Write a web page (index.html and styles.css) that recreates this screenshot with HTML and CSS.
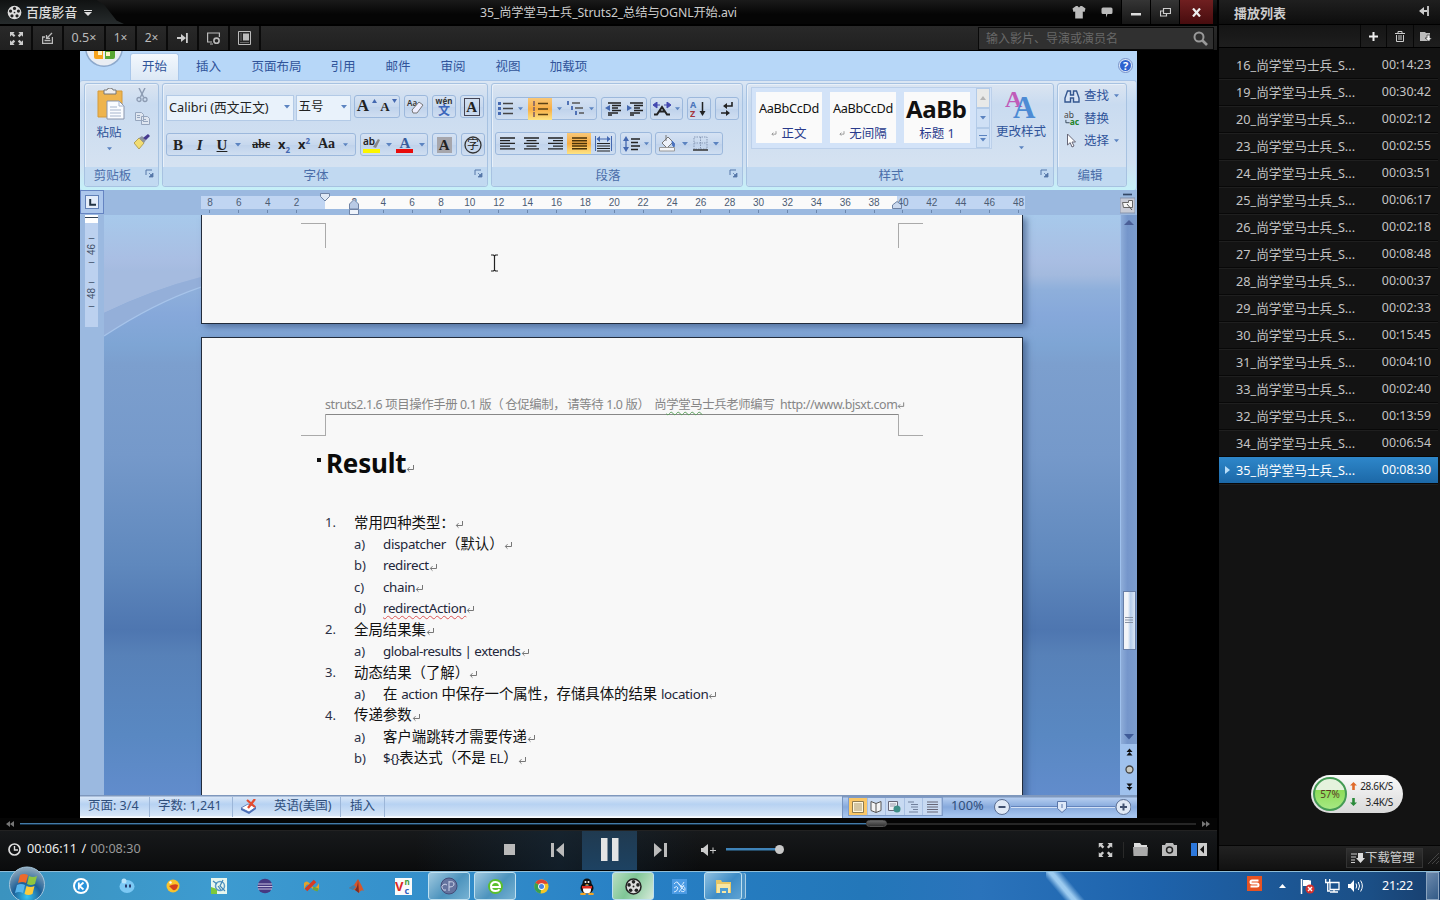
FILE: index.html
```html
<!DOCTYPE html>
<html lang="zh-CN">
<head>
<meta charset="utf-8">
<title>百度影音</title>
<link rel="stylesheet" href="styles.css">
</head>
<body>
<svg class="defs" width="0" height="0">
  <symbol id="ret" viewBox="0 0 9 9"><path d="M7.5 1v4.500h-6M3.500 3.200L1.300 5.500l2.200 2.200" fill="none" stroke="#777" stroke-width="1"/></symbol>
  <symbol id="dd" viewBox="0 0 6 4"><path d="M0 0h6L3 3.500z" fill="#5b83c0"/></symbol>
  <symbol id="launch" viewBox="0 0 9 9"><path d="M1 6V1h6" fill="none" stroke="#5577a8"/><path d="M4 4l3 3M8 4v4H4z" fill="#5577a8" stroke="#5577a8" stroke-width=".8"/></symbol>
  <symbol id="reel" viewBox="0 0 16 16"><circle cx="8" cy="8" r="7.300" fill="#ddd"/><g fill="#222"><circle cx="8" cy="3.600" r="1.700"/><circle cx="12.200" cy="6.500" r="1.700"/><circle cx="10.700" cy="11.500" r="1.700"/><circle cx="5.300" cy="11.500" r="1.700"/><circle cx="3.800" cy="6.500" r="1.700"/><circle cx="8" cy="8" r=".9"/></g></symbol>
  <symbol id="full" viewBox="0 0 14 14"><path d="M0 0h5L3.600 1.500l2.200 2.200-1.700 1.700-2.300-2.200L0 5zM14 0v5l-1.600-1.600-2.300 2.200-1.700-1.700 2.200-2.200L9 0zM0 14V9l1.600 1.600 2.300-2.200 1.700 1.700-2.200 2.200L5 14zM14 14H9l1.600-1.600-2.200-2.300 1.700-1.700 2.300 2.200L14 9z"/></symbol>
</svg>

<div class="desktop">
<main class="player">
  <header class="titlebar">
    <div class="brand"><svg width="15" height="15"><use href="#reel"/></svg><b>百度影音</b><svg width="8" height="6" viewBox="0 0 8 6"><path d="M0 0h8v1H0zM0 2h8L4 6z" fill="#ddd"/></svg></div>
    <div class="movie">35_尚学堂马士兵_Struts2_总结与OGNL开始.avi</div>
    <div class="wins">
      <span class="plain"><svg width="14" height="14" viewBox="0 0 14 14"><path d="M4 1h1.500l1.500 1.500L8.500 1H10l3.500 2.500-1 3.500-1.700-.6V13.500H3.200V6.400L1.500 7l-1-3.500z" fill="#bbb"/></svg></span>
      <span class="plain"><svg width="12" height="11" viewBox="0 0 12 11"><path d="M2 .5h8q1.500 0 1.500 1.500v3.500q0 1.500-1.500 1.500H6.500L5 10.500V7H2Q.5 7 .5 5.500V2Q.5.500 2 .5z" fill="#bbb"/></svg></span>
      <span class="wbtn"><svg width="10" height="10"><path d="M0 6h10v2.500H0z" fill="#ddd"/></svg></span>
      <span class="wbtn"><svg width="11" height="9" viewBox="0 0 11 9"><path d="M3.500.5h7v5h-7zM3 3H.5v5h6V6" fill="none" stroke="#ccc" stroke-width="1.200"/></svg></span>
      <span class="wbtn close"><svg width="9" height="9" viewBox="0 0 9 9"><path d="M1 .5l7 8M8 .5l-7 8" stroke="#eee" stroke-width="2.200"/></svg></span>
    </div>
  </header>
  <div class="toolbar">
    <span><svg width="13" height="13" fill="#ccc"><use href="#full"/></svg></span>
    <span><svg width="11" height="12" viewBox="0 0 11 12"><path d="M3 5H.6v6.400h9.800V5M2.500 8.500h6M10 1L5 6M4.500 3v3.400H8" fill="none" stroke="#bbb" stroke-width="1.300"/></svg></span>
    <span>0.5×</span><span>1×</span><span>2×</span>
    <span><svg width="11" height="10" viewBox="0 0 11 10"><path d="M0 4h4V1l5 4-5 4V6H0zM9 0h1.800v10H9z" fill="#ccc"/></svg></span>
    <span><svg width="14" height="13" viewBox="0 0 14 13"><path d="M5 10H.6V1h11.800v4" fill="none" stroke="#bbb" stroke-width="1.200"/><circle cx="9.500" cy="8.700" r="2.600" fill="none" stroke="#bbb" stroke-width="1.600"/><path d="M3 12h3" stroke="#bbb"/></svg></span>
    <span><svg width="13" height="14" viewBox="0 0 13 14"><path d="M.5.500h12v13H.5z" fill="none" stroke="#bbb"/><path d="M5 2.500h6v7H5z" fill="#bbb"/><path d="M2 11.500h9M3 2v8" stroke="#666"/></svg></span>
    <div class="search">输入影片、导演或演员名<svg width="15" height="15" viewBox="0 0 15 15"><circle cx="6" cy="6" r="4.500" fill="none" stroke="#999" stroke-width="2"/><path d="M9.500 9.500l4.500 4.500" stroke="#999" stroke-width="2.600"/></svg></div>
  </div>

  <section class="video">
  <div class="word">
    <nav class="tabs">
      <div class="orb"><svg width="40" height="17" viewBox="0 0 40 17"><circle cx="20" cy="-3" r="19" fill="#8da9cc"/><circle cx="20" cy="-3" r="17.500" fill="#e9edf3"/><path d="M10 0h9v8h-7q-2 0-2-2z" fill="#f6a21b"/><path d="M21 0h10v6q0 2-2 2h-8z" fill="#58a632"/><path d="M14 0h4v4h-4zM22 1h4v4h-4z" fill="#fff3c0"/></svg></div>
      <span class="on">开始</span><span class="t2">插入</span><span class="t4">页面布局</span><span class="t2 a">引用</span><span class="t2 b">邮件</span><span class="t2 a">审阅</span><span class="t2 b">视图</span><span class="t3">加载项</span>
      <i class="help"><svg width="15" height="15" viewBox="0 0 15 15"><circle cx="7.500" cy="7.500" r="7" fill="#d9e6f8" stroke="#7892c8"/><circle cx="7.500" cy="7.500" r="5.500" fill="#2f62cf"/><text x="7.500" y="11.500" text-anchor="middle" font-size="11" font-weight="700" fill="#fff">?</text></svg></i>
    </nav>

    <div class="ribbon">
      <section class="grp clip">
        <div class="body">
          <div class="paste"><svg width="28" height="32" viewBox="0 0 28 32"><path d="M1 3h24v26H1z" fill="#eeb44d" stroke="#d59a3a"/><path d="M7 2h3q0-2 3-2t3 2h3v4H7z" fill="#eee" stroke="#777"/><path d="M10 13h12l5 5v13H10z" fill="#fafcff" stroke="#8995ac"/><path d="M22 13v5h5M13 19h7M13 22h11M13 25h11M13 28h11" fill="none" stroke="#a6b4cc"/></svg><span>粘贴</span><svg width="5" height="4"><use href="#dd"/></svg></div>
          <div class="mini">
            <svg width="12" height="15" viewBox="0 0 12 15"><path d="M3 0l4.500 9M9 0L4.500 9" stroke="#8c9bb2" stroke-width="1.400"/><circle cx="3" cy="11.500" r="2" fill="none" stroke="#8c9bb2" stroke-width="1.300"/><circle cx="9" cy="11.500" r="2" fill="none" stroke="#8c9bb2" stroke-width="1.300"/></svg>
            <svg width="15" height="13" viewBox="0 0 15 13"><path d="M.5.500h6l2 2v6h-8zM6.500 4.500h6l2 2v6h-8z" fill="#dfe6f0" stroke="#95a5bd"/><path d="M8 7.500h3M8 9.500h5M2 3.500h3M2 5.500h3" stroke="#95a5bd"/></svg>
            <svg width="16" height="15" viewBox="0 0 16 15"><path d="M0 9l5-5 5 5-5 6z" fill="#f1dc72" stroke="#a69241" stroke-width=".8"/><path d="M5 4l3-2 4 4-2 3z" fill="#8d949e"/><path d="M9 4l5-4 2 2-4 4z" fill="#453a8f"/></svg>
          </div>
        </div>
        <footer><b>剪贴板</b><svg width="9" height="9"><use href="#launch"/></svg></footer>
      </section>

      <section class="grp font">
        <div class="body rows">
          <div class="row r1">
            <div class="combo c1"><span>Calibri (西文正文)</span><svg width="6" height="4"><use href="#dd"/></svg></div>
            <div class="combo c2"><span>五号</span><svg width="6" height="4"><use href="#dd"/></svg></div>
            <div class="box w46"><i class="g big">A</i><svg class="tip" width="5" height="4"><path d="M0 4h5L2.500 0z" fill="#4468b0"/></svg><i class="g small">A</i><svg class="tip" width="5" height="4"><path d="M0 0h5L2.500 4z" fill="#4468b0"/></svg></div>
            <div class="box w25"><svg width="19" height="18" viewBox="0 0 19 18"><text x="1" y="8" font-size="8" font-weight="600" fill="#333">Aa</text><path d="M6 12l7-8 4 3-6 8H7z" fill="#eef" stroke="#777"/></svg></div>
            <div class="box w25"><svg width="20" height="20" viewBox="0 0 20 20"><text x="10" y="7" text-anchor="middle" font-size="8" font-weight="700" fill="#333">wén</text><text x="10" y="18" text-anchor="middle" font-size="12" font-weight="700" fill="#3c66bb">文</text></svg></div>
            <div class="box w25"><i class="g frame">A</i></div>
          </div>
          <div class="row r2">
            <div class="box fmt"><i class="g">B</i><i class="g it">I</i><i class="g u">U</i><svg width="6" height="4"><use href="#dd"/></svg><i class="g st">abc</i><i class="g x">x<sub>2</sub></i><i class="g x">x<sup>2</sup></i><i class="g aa">Aa</i><svg width="5" height="4"><use href="#dd"/></svg></div>
            <div class="box w68"><svg width="18" height="18" viewBox="0 0 18 18"><text x="0" y="9" font-size="10" font-weight="600" fill="#222">ab</text><path d="M10 11l5-8 2 1-4 8z" fill="#888"/><path d="M0 13h17v4H0z" fill="#fbf500"/></svg><svg width="6" height="4"><use href="#dd"/></svg><svg width="18" height="18" viewBox="0 0 18 18"><text x="9" y="12" text-anchor="middle" class="serif" font-size="15" font-weight="700" fill="#3a5d9c">A</text><path d="M0 13h17v4H0z" fill="#e80c0c"/></svg><svg width="6" height="4"><use href="#dd"/></svg></div>
            <div class="box w25"><i class="g shade">A</i></div>
            <div class="box w25"><svg width="18" height="18" viewBox="0 0 18 18"><circle cx="9" cy="9" r="8" fill="none" stroke="#333" stroke-width="1.300"/><text x="9" y="13.300" text-anchor="middle" font-size="12" fill="#222">字</text></svg></div>
          </div>
        </div>
        <footer><b>字体</b><svg width="9" height="9"><use href="#launch"/></svg></footer>
      </section>

      <section class="grp para">
        <div class="body rows">
          <div class="row p1">
            <div class="box w102">
              <svg width="15" height="15" viewBox="0 0 15 15"><path d="M5 2.500h10M5 7.500h10M5 12.500h10" stroke="#444" stroke-width="1.300"/><path d="M0 1h3v3H0zM0 6h3v3H0zM0 11h3v3H0z" fill="#4468b0"/></svg><svg width="5" height="4"><use href="#dd"/></svg>
              <b class="hot"><svg width="16" height="16" viewBox="0 0 16 16"><path d="M6 2.500h10M6 8h10M6 13.500h10" stroke="#5b4215" stroke-width="1.400"/><path d="M2 0v5M2 6v4M2 11v5" stroke="#866" stroke-width="1.700"/></svg></b><svg width="5" height="4"><use href="#dd"/></svg>
              <svg width="17" height="15" viewBox="0 0 17 15"><path d="M5 2h8M8 7h8M12 12h5" stroke="#555" stroke-width="1.300"/><path d="M1 0v4M5 5v4M9 10v4" stroke="#4468b0" stroke-width="1.800"/></svg><svg width="5" height="4"><use href="#dd"/></svg>
            </div>
            <div class="box w46">
              <svg width="17" height="14" viewBox="0 0 17 14"><path d="M4 1h13M8 3.500h9M8 6h6M8 8.500h9M4 11h10M4 13h4" stroke="#222" stroke-width="1.400"/><path d="M6 3v6L1 6z" fill="#4468b0"/></svg>
              <svg width="17" height="14" viewBox="0 0 17 14"><path d="M4 1h13M8 3.500h9M8 6h6M8 8.500h9M4 11h10M4 13h4" stroke="#222" stroke-width="1.400"/><path d="M1 3v6l5-3z" fill="#4468b0"/></svg>
            </div>
            <div class="box w33"><svg width="18" height="14" viewBox="0 0 18 14"><path d="M1 12.500h3L9 5l5 7.500h3M6 9.500h6" fill="none" stroke="#222" stroke-width="2"/><path d="M4 0L0 3l4 3zM14 0l4 3-4 3zM4 3h3M11 3h3" fill="#4348b0" stroke="#4348b0"/></svg><svg width="5" height="4"><use href="#dd"/></svg></div>
            <div class="box w25"><svg width="17" height="18" viewBox="0 0 17 18"><text x="0" y="8" font-size="9" font-weight="700" fill="#4a75bb">A</text><text x="0" y="17" font-size="9" font-weight="700" fill="#a3363d">Z</text><path d="M12.500 2v12" stroke="#222" stroke-width="1.500"/><path d="M9.500 11h6l-3 5z" fill="#222"/></svg></div>
            <div class="box w25"><svg width="12" height="14" viewBox="0 0 12 14"><path d="M11 0v4H5M0 11h6" fill="none" stroke="#222" stroke-width="1.600"/><path d="M6 1v6L2 4zM5 8v6l4-3z" fill="#222"/></svg></div>
          </div>
          <div class="row p2">
            <div class="box al">
              <b><svg width="15" height="13" viewBox="0 0 15 13"><path d="M0 1h15M0 3.700h10M0 6.400h15M0 9.100h10M0 11.800h15" stroke="#222" stroke-width="1.300"/></svg></b>
              <b><svg width="15" height="13" viewBox="0 0 15 13"><path d="M0 1h15M2.500 3.700h10M0 6.400h15M2.500 9.100h10M0 11.800h15" stroke="#222" stroke-width="1.300"/></svg></b>
              <b><svg width="15" height="13" viewBox="0 0 15 13"><path d="M0 1h15M5 3.700h10M0 6.400h15M5 9.100h10M0 11.800h15" stroke="#222" stroke-width="1.300"/></svg></b>
              <b class="hot"><svg width="15" height="13" viewBox="0 0 15 13"><path d="M0 1h15M0 3.700h15M0 6.400h15M0 9.100h15M0 11.800h15" stroke="#4a3208" stroke-width="1.500"/></svg></b>
              <b><svg width="17" height="16" viewBox="0 0 17 16"><path d="M.5 0v15M16.500 0v15M2 3h13" stroke="#4468b0"/><path d="M5 0v6L1.500 3zM12 0v6l3.500-3z" fill="#4468b0"/><path d="M2 7.500h13M2 10h13M2 12.500h13M2 15h13" stroke="#222" stroke-width="1.200"/></svg></b>
            </div>
            <div class="box w32"><svg width="17" height="16" viewBox="0 0 17 16"><path d="M3 2v12" stroke="#4468b0" stroke-width="1.300"/><path d="M0 5l3-5 3 5zM0 11l3 5 3-5z" fill="#4468b0"/><path d="M8 3h9M8 6.500h7M8 10h9M8 13.500h7" stroke="#222" stroke-width="1.400"/></svg><svg width="5" height="4"><use href="#dd"/></svg></div>
            <div class="box w68"><svg width="18" height="17" viewBox="0 0 18 17"><path d="M3 8l6-6 5 5-6 6z" fill="#eef2fa" stroke="#777"/><path d="M7 0v6" stroke="#777"/><path d="M13 6q4 2 2 6-2-1-2-6z" fill="#4971bd" stroke="#4971bd"/><path d="M.5 12.500h15v3.500H.5z" fill="#f2f4f7" stroke="#999"/></svg><svg width="6" height="4"><use href="#dd"/></svg><svg width="15" height="15" viewBox="0 0 15 15"><path d="M1 1h13v12H1zM7.500 1v12M1 7h13" fill="none" stroke="#8798b5" stroke-dasharray="1.500 1"/><path d="M0 14h15" stroke="#333" stroke-width="1.500"/></svg><svg width="6" height="4"><use href="#dd"/></svg></div>
          </div>
        </div>
        <footer><b>段落</b><svg width="9" height="9"><use href="#launch"/></svg></footer>
      </section>

      <section class="grp sty">
        <div class="body">
          <div class="gallery">
            <div class="card"><em>AaBbCcDd</em><span><svg width="6" height="7"><use href="#ret"/></svg> 正文</span></div>
            <div class="card"><em>AaBbCcDd</em><span><svg width="6" height="7"><use href="#ret"/></svg> 无间隔</span></div>
            <div class="card"><em class="h1">AaBb</em><span>标题 1</span></div>
            <div class="updn"><i class="off"><svg width="6" height="4" viewBox="0 0 6 4"><path d="M0 4h6L3 0z" fill="#b5b5b5"/></svg></i><i><svg width="6" height="4"><use href="#dd"/></svg></i><i><svg width="8" height="7" viewBox="0 0 8 7"><path d="M0 .5h8" stroke="#5b83c0"/><path d="M1 3h6L4 6.500z" fill="#5b83c0"/></svg></i></div>
          </div>
          <div class="change"><svg width="32" height="30" viewBox="0 0 32 30"><text x="0" y="18" class="serif" font-size="24" font-weight="700" fill="#c05bb9">A</text><text x="8" y="29" class="serif" font-size="31" font-weight="700" fill="#4d8bd4">A</text></svg><span>更改样式</span><svg width="5" height="4"><use href="#dd"/></svg></div>
        </div>
        <footer><b>样式</b><svg width="9" height="9"><use href="#launch"/></svg></footer>
      </section>

      <section class="grp edit">
        <div class="body">
          <p><svg width="15" height="13" viewBox="0 0 15 13"><path d="M3 1h3v4h3V1h3l2.500 7v4H9V8H6v4H.5V8z" fill="#dae5f5" stroke="#33568f" stroke-width="1.400"/></svg><span>查找</span><svg width="5" height="4"><use href="#dd"/></svg></p>
          <p><svg width="17" height="15" viewBox="0 0 17 15"><text x="0" y="7" font-size="9" fill="#444">ab</text><text x="6" y="14" font-size="9" font-weight="700" fill="#22832a">ac</text><path d="M2 9v3h4" fill="none" stroke="#345"/></svg><span>替换</span></p>
          <p><svg width="15" height="14" viewBox="0 0 15 14"><path d="M3 0v11l2.700-2.400L7.500 13l2-1-2-4h3.500z" fill="#fff" stroke="#667"/></svg><span>选择</span><svg width="5" height="4"><use href="#dd"/></svg></p>
        </div>
        <footer><b>编辑</b></footer>
      </section>
    </div>

    <div class="hruler">
      <div class="tabsel"><i><svg width="7" height="7"><path d="M1.200 0v5.800H7" fill="none" stroke="#234" stroke-width="2"/></svg></i></div>
      <div class="scale">
        <div class="nums"><i>8</i><i>6</i><i>4</i><i>2</i><i></i><i>2</i><i>4</i><i>6</i><i>8</i><i>10</i><i>12</i><i>14</i><i>16</i><i>18</i><i>20</i><i>22</i><i>24</i><i>26</i><i>28</i><i>30</i><i>32</i><i>34</i><i>36</i><i>38</i><i>40</i><i>42</i><i>44</i><i>46</i><i>48</i></div>
        <svg class="mk first" width="10" height="9" viewBox="0 0 10 9"><path d="M.5.500h9v3L5 8 .5 3.500z" fill="#dfe8f5" stroke="#6f83a5"/></svg>
        <svg class="mk left" width="10" height="16" viewBox="0 0 10 16"><path d="M5 .5l4.500 4.500v5h-9V5z" fill="#b9cbe6" stroke="#6f83a5"/><path d="M.5 10.500h9v5h-9z" fill="#eef3fb" stroke="#6f83a5"/></svg>
        <svg class="mk right" width="10" height="8" viewBox="0 0 10 8"><path d="M5 .5L9.500 4v3.500h-9V4z" fill="#cbd9ee" stroke="#6f83a5"/></svg>
      </div>
      <div class="corner"><svg width="15" height="22" viewBox="0 0 15 22"><path d="M3 2.500h9" stroke="#334766" stroke-width="1.700"/><path d="M0 6h15v15H0z" fill="#c8cbd6" stroke="#8794ad"/><path d="M2.500 10.500h6v-2h4v7h-9z" fill="#f5f5f5" stroke="#666"/><path d="M7 12l5 6" stroke="#555"/></svg></div>
    </div>

    <div class="doc">
      <div class="vruler"><div class="vs"><b></b><i>–</i><u>46</u><i>–</i><i>–</i><u>48</u><i>–</i></div></div>
      <div class="canvas">
        <svg class="curve" width="97" height="125" viewBox="0 0 97 125"><path d="M0 56H97V62Q50 74 0 98z" fill="#a5bbdf"/><path d="M0 98Q50 74 97 62V72Q50 88 0 121z" fill="#94afd9"/><path d="M0 121Q50 88 97 72" fill="none" stroke="#a7c4ea" stroke-width="1.300"/></svg>
        <article class="page one"><i class="cm br"></i><i class="cm bl"></i></article>
        <article class="page two">
          <div class="phead"><span>struts2.1.6 项目操作手册 0.1 版<q>（</q>仓促编制<q>，</q>请等待 1.0 版<q>）</q>&nbsp;尚<s>学堂马</s>士兵老师编写&nbsp; http://www.bjsxt.com</span><svg width="8" height="9"><use href="#ret"/></svg></div>
          <div class="corners"><i class="cm tr"></i><i class="cm tl"></i></div>
          <h1><i></i>Result<svg width="9" height="9"><use href="#ret"/></svg></h1>
          <ol class="list">
            <li><b>1.</b><span>常用四种类型：</span><svg width="9" height="9"><use href="#ret"/></svg></li>
            <li class="sub"><b>a)</b><span><em>dispatcher</em>（默认）</span><svg width="9" height="9"><use href="#ret"/></svg></li>
            <li class="sub"><b>b)</b><span><em>redirect</em></span><svg width="9" height="9"><use href="#ret"/></svg></li>
            <li class="sub"><b>c)</b><span><em>chain</em></span><svg width="9" height="9"><use href="#ret"/></svg></li>
            <li class="sub"><b>d)</b><span><em class="bad">redirectAction</em></span><svg width="9" height="9"><use href="#ret"/></svg></li>
            <li><b>2.</b><span>全局结果集</span><svg width="9" height="9"><use href="#ret"/></svg></li>
            <li class="sub"><b>a)</b><span><em class="tight">global-results | extends</em></span><svg width="9" height="9"><use href="#ret"/></svg></li>
            <li><b>3.</b><span>动态结果（了解）</span><svg width="9" height="9"><use href="#ret"/></svg></li>
            <li class="sub"><b>a)</b><span>在 <em>action</em> 中保存一个属性，存储具体的结果 <em>location</em></span><svg width="9" height="9"><use href="#ret"/></svg></li>
            <li><b>4.</b><span>传递参数</span><svg width="9" height="9"><use href="#ret"/></svg></li>
            <li class="sub"><b>a)</b><span>客户端跳转才需要传递</span><svg width="9" height="9"><use href="#ret"/></svg></li>
            <li class="sub"><b>b)</b><span><em class="tight">${}</em>表达式（不是 <em>EL</em>）</span><svg width="9" height="9"><use href="#ret"/></svg></li>
          </ol>
        </article>
        <svg class="ibeam" width="9" height="18" viewBox="0 0 9 18"><path d="M1 1h2.500l1 1 1-1H8M4.500 2v14M1 17h2.500l1-1 1 1H8" fill="none" stroke="#222" stroke-width="1.200"/></svg>
      </div>
      <div class="vscroll">
        <div class="track"><svg width="10" height="6"><path d="M0 5h10L5 0z" fill="#4a5f98"/></svg><div class="thumb"><svg width="8" height="8"><path d="M0 .5h8M0 3h8M0 5.500h8" stroke="#8a93a5"/></svg></div><svg width="10" height="6"><path d="M0 0h10L5 5.500z" fill="#3f5b98"/></svg></div>
        <div class="jump"><svg width="7" height="8" viewBox="0 0 7 8"><path d="M.5 4L3.500.5l3 3.500zM.5 7.500l3-3.500 3 3.500z" fill="#111"/></svg><svg width="9" height="9"><circle cx="4.500" cy="4.500" r="3.500" fill="#c9c9c0" stroke="#444" stroke-width="1.300"/></svg><svg width="7" height="8" viewBox="0 0 7 8"><path d="M.5.500h6l-3 3.500zM.5 4h6l-3 3.500z" fill="#111"/></svg></div>
      </div>
    </div>

    <div class="status">
      <span class="s1">页面: 3/4</span><span class="s2">字数: 1,241</span><span class="s3"><svg width="17" height="15" viewBox="0 0 17 15"><path d="M0 9l7-4 8 3-7 5z" fill="#fff" stroke="#6983bb"/><path d="M0 9l8 4 7-5v2l-7 5-8-4z" fill="#4a6db5"/><path d="M6 1l8 7M14 0L7 9" stroke="#e44b2f" stroke-width="2.300"/></svg></span><span class="s4">英语(美国)</span><span class="s5">插入</span>
      <div class="sright">
        <div class="views">
          <i class="on"><svg width="12" height="12"><path d="M.5.500h11v11H.5z" fill="#fff7dc" stroke="#8d7b50"/><path d="M2 3h8M2 5h8M2 7h8M2 9h8" stroke="#a8956a"/></svg></i>
          <i><svg width="12" height="12"><path d="M6 2.500L1 .5v9l5 2 5-2v-9zM6 2.500v9" fill="#f4f4f4" stroke="#555"/></svg></i>
          <i><svg width="13" height="12"><path d="M.5.500h9v9h-9z" fill="#eef2f7" stroke="#667"/><path d="M2 3h6M2 5h5" stroke="#99a"/><circle cx="9" cy="8" r="3.500" fill="#3d8f88"/></svg></i>
          <i><svg width="11" height="12"><path d="M0 1h6M3 3.500h7M3 6h7M5 8.500h5M1 11h9" stroke="#71809c"/></svg></i>
          <i><svg width="11" height="12"><path d="M0 1h11M0 3.500h11M0 6h11M0 8.500h11M0 11h11" stroke="#667"/></svg></i>
        </div>
        <span class="pct">100%</span>
        <svg width="138" height="18" viewBox="0 0 138 18"><path d="M18 8.500h104" stroke="#6384bd"/><path d="M18 9.500h104" stroke="#d3e1f5"/><g fill="#dfe8f5" stroke="#596d91"><circle cx="9" cy="9" r="7.500"/><circle cx="130.500" cy="9" r="7.500"/></g><path d="M5.500 9h7M127 9h7M130.500 5.500v7" stroke="#40506f" stroke-width="2"/><path d="M64.500 3.500h9v7l-4.500 4-4.500-4z" fill="#dfe9f8" stroke="#5a76a8"/><path d="M69 6v4" stroke="#5a76a8"/></svg>
      </div>
    </div>
  </div>
  </section>

  <div class="seek"><svg width="8" height="6"><path d="M4 0v6L0 3zM8 0v6L4 3z" fill="#777"/></svg><div class="bar"><i></i><b></b></div><svg width="8" height="6"><path d="M0 0v6l4-3zM4 0v6l4-3z" fill="#777"/></svg></div>

  <div class="controls">
    <svg width="13" height="13"><circle cx="6.500" cy="6.500" r="5.500" fill="none" stroke="#ddd" stroke-width="1.700"/><path d="M6.500 3v4H10" fill="none" stroke="#ddd" stroke-width="1.400"/></svg>
    <span class="time"><b>00:06:11 /</b> 00:08:30</span>
    <div class="mid">
      <span class="k1"><svg width="11" height="11"><path d="M0 0h11v11H0z" fill="#b9b9b9"/></svg></span>
      <span class="k2 prev"><svg width="13" height="14"><path d="M0 0h3v14H0zM13 0v14L5 7z" fill="#bbb"/></svg></span>
      <span class="pause"><svg width="18" height="23"><path d="M0 0h6.500v23H0zM11 0h6.500v23H11z" fill="#e4e4e4"/></svg></span>
      <span class="k2"><svg width="13" height="14"><path d="M10 0h3v14h-3zM0 0v14l8-7z" fill="#bbb"/></svg></span>
    </div>
    <svg class="vol" width="15" height="12"><path d="M0 4h2l5-4v12L2 8H0z" fill="#ccc"/><path d="M9 6.500h6M12 3.500v6" stroke="#ccc"/></svg>
    <div class="vbar"></div>
    <div class="right">
      <svg width="15" height="14" viewBox="0 0 14 14" fill="#ccc"><use href="#full"/></svg><i></i>
      <svg width="15" height="13"><path d="M1 0h6l1.500 2H14v2H1z" fill="#ddd"/><path d="M0 4h15l-.5 9H.5z" fill="#aaa"/></svg>
      <svg width="15" height="13"><path d="M4 0h7l1 2h3v11H0V2h3z" fill="#bbb"/><circle cx="7.500" cy="7" r="3" fill="none" stroke="#222" stroke-width="1.500"/></svg>
      <svg width="16" height="13"><path d="M0 0h6v13H0z" fill="#2d78dc"/><path d="M7 0h9v13H7z" fill="#ccc"/><path d="M13 2.500v8L9 6.500z" fill="#111"/></svg>
    </div>
  </div>
</main>

<aside class="playlist">
  <header><b>播放列表</b><svg width="10" height="10"><path d="M9 0v10M1 5h7" stroke="#ccc" stroke-width="1.800"/><path d="M5 1v8L0 5z" fill="#ccc"/></svg></header>
  <div class="pt"><span><svg width="9" height="9"><path d="M0 4.500h9M4.500 0v9" stroke="#eee" stroke-width="2"/></svg></span><span><svg width="10" height="11"><path d="M0 2.500h10M3 2V.5h4V2" fill="none" stroke="#ccc"/><path d="M1.500 4v6.500h7V4M4 4v5M6 4v5" fill="none" stroke="#ccc"/></svg></span><span><svg width="12" height="10"><path d="M0 1h5l1 1h4v8H0z" fill="#bbb"/><path d="M7 4h3v3h2l-3.500 3L5 7h2z" fill="#eee" stroke="#222" stroke-width=".6"/></svg></span></div>
  <ul>
    <li><span>16_尚学堂马士兵_S...</span><time>00:14:23</time></li>
    <li><span>19_尚学堂马士兵_S...</span><time>00:30:42</time></li>
    <li><span>20_尚学堂马士兵_S...</span><time>00:02:12</time></li>
    <li><span>23_尚学堂马士兵_S...</span><time>00:02:55</time></li>
    <li><span>24_尚学堂马士兵_S...</span><time>00:03:51</time></li>
    <li><span>25_尚学堂马士兵_S...</span><time>00:06:17</time></li>
    <li><span>26_尚学堂马士兵_S...</span><time>00:02:18</time></li>
    <li><span>27_尚学堂马士兵_S...</span><time>00:08:48</time></li>
    <li><span>28_尚学堂马士兵_S...</span><time>00:00:37</time></li>
    <li><span>29_尚学堂马士兵_S...</span><time>00:02:33</time></li>
    <li><span>30_尚学堂马士兵_S...</span><time>00:15:45</time></li>
    <li><span>31_尚学堂马士兵_S...</span><time>00:04:10</time></li>
    <li><span>33_尚学堂马士兵_S...</span><time>00:02:40</time></li>
    <li><span>32_尚学堂马士兵_S...</span><time>00:13:59</time></li>
    <li><span>34_尚学堂马士兵_S...</span><time>00:06:54</time></li>
    <li class="now"><svg width="5" height="8"><path d="M0 0v8l5-4z" fill="#b9ddf8"/></svg><span>35_尚学堂马士兵_S...</span><time>00:08:30</time></li>
  </ul>
  <footer><div class="dl"><svg width="14" height="10"><path d="M0 1h6M0 4h5M0 7h4M0 9.500h4" stroke="#ccc"/><path d="M7 0h5v5h2L9.500 10 5 5h2z" fill="#ddd"/></svg>下载管理</div><svg width="13" height="13"><path d="M1 12L12 1M5 12l7-7M9 12l3-3" stroke="#444"/></svg></footer>
  <div class="pill"><div class="ball">57%</div><div class="rates"><p><svg width="7" height="8"><path d="M3.500 0L7 3.500H4.800V8H2.200V3.500H0z" fill="#e06a2b"/></svg>28.6K/S</p><p><svg width="7" height="8"><path d="M3.500 8L7 4.500H4.800V0H2.200v4.500H0z" fill="#2b8a3a"/></svg>3.4K/S</p></div></div>
</aside>
</div>

<footer class="taskbar">
  <div class="start"><svg width="38" height="34" viewBox="0 0 38 34"><defs><radialGradient id="sg" cx=".5" cy=".85" r=".8"><stop offset="0" stop-color="#35c4f2"/><stop offset=".5" stop-color="#1c5f97"/><stop offset="1" stop-color="#8aa5ba"/></radialGradient></defs><circle cx="19" cy="18.500" r="17.500" fill="url(#sg)" stroke="#a3c6dc"/><path d="M12 9q4-2 8 0l-2 8q-4-2-8 0z" fill="#ee6a2c"/><path d="M21 10q4 2 8 0l-2 8q-4 2-8 0z" fill="#8fc640"/><path d="M9 19q4-2 8 0l-2 8q-4-2-8 0z" fill="#58b5ec"/><path d="M18.500 20q4 2 8 0l-2 8q-4 2-8 0z" fill="#fbcb3c"/></svg></div>
  <span><svg width="18" height="18" viewBox="0 0 18 18"><circle cx="9" cy="9" r="8" fill="#fff"/><circle cx="9" cy="9" r="6" fill="#2a93da"/><path d="M6.800 5.500v7M11.500 5.500L7.500 9l4 3.500" fill="none" stroke="#fff" stroke-width="1.800"/></svg></span>
  <span><svg width="16" height="16"><ellipse cx="8" cy="8.500" rx="7.500" ry="6.500" fill="#7cc9f5"/><circle cx="5" cy="3" r="2.500" fill="#b5e2fa"/><path d="M7 6.500v3M11 6.500v3" stroke="#114" stroke-width="1.500"/></svg></span>
  <span><svg width="16" height="16"><circle cx="8" cy="8" r="6.500" fill="#f9c32d"/><path d="M4 8q6-3 9-1-1 6-5 5z" fill="#d5401d"/><circle cx="5.500" cy="4.500" r="1.200" fill="#fff"/></svg></span>
  <span><svg width="16" height="16"><path d="M0 0h16v16H0z" fill="#e7f6ee"/><path d="M0 9l6 2v5H0z" fill="#7dc93c"/><circle cx="9" cy="8" r="4.500" fill="none" stroke="#5b9bc8" stroke-width="1.500"/><path d="M2 3l4 3M12 2l-3 6 5 5M7 8l3 4" stroke="#4288b5" stroke-width="1.200" fill="none"/></svg></span>
  <span><svg width="16" height="16"><circle cx="8" cy="8" r="7.300" fill="#463881"/><path d="M1 6h14M.5 8.500h15M1 11h14" stroke="#c5bddd" stroke-width="1.100"/></svg></span>
  <span><svg width="17" height="14"><path d="M1 4q3-4 7 2t8-2v6q-4 4-8-2t-7 3z" fill="#e5a329"/><path d="M3 11L12 2" stroke="#d83b22" stroke-width="3.500"/><path d="M10 9l5 2" stroke="#6ba63a" stroke-width="3"/></svg></span>
  <span><svg width="16" height="15"><path d="M0 9l5-3 4-6q3 5 6 12-3-2-5 2l-4-3z" fill="#d7562a"/><path d="M0 9l5-3 2 2-3 3z" fill="#3f7ea9"/><path d="M9 0q0 8-3 11l4 3z" fill="#792d27"/></svg></span>
  <span><svg width="17" height="17"><path d="M0 0h17v17H0z" fill="#fafafa"/><text x="0" y="13" font-size="13" font-weight="700" fill="#da2828">V</text><text x="9.500" y="7" font-size="8" font-weight="700" fill="#3a9b35">n</text><text x="9.500" y="15.500" font-size="9" font-weight="700" fill="#2c60c4">c</text></svg></span>
  <span class="open"><svg width="18" height="18"><circle cx="9" cy="9" r="8" fill="#65739e" stroke="#444c78"/><path d="M6 13a3 3 0 1 1 1-5M9 4v10M9 5q5-1 5 2t-5 3" fill="none" stroke="#cfd5ea"/></svg></span>
  <span class="open"><svg width="17" height="17"><circle cx="8.500" cy="8.500" r="7.500" fill="#5abf2c"/><path d="M5 9h8q0-5-4.500-5T4 8.500 8.500 13q3 0 4-1.800" fill="none" stroke="#fff" stroke-width="2"/></svg></span>
  <span><svg width="15" height="15" viewBox="0 0 16 16"><circle cx="8" cy="8" r="7.500" fill="#f3c626"/><path d="M8 8L1.500 4A7.500 7.500 0 0 1 14.800 5H8z" fill="#dc4435"/><path d="M8 8L1.500 4A7.500 7.500 0 0 0 7 15.400z" fill="#36a052"/><circle cx="8" cy="8" r="3.600" fill="#fff"/><circle cx="8" cy="8" r="2.700" fill="#4a86e4"/></svg></span>
  <span><svg width="16" height="17"><ellipse cx="8" cy="10" rx="6.500" ry="6" fill="#111"/><circle cx="8" cy="5" r="4.500" fill="#111"/><ellipse cx="8" cy="11.500" rx="4" ry="4" fill="#fff"/><path d="M3 8h10v2.500H3z" fill="#e12d22"/><ellipse cx="4" cy="16" rx="3" ry="1.200" fill="#f5a623"/><ellipse cx="12" cy="16" rx="3" ry="1.200" fill="#f5a623"/><circle cx="6.500" cy="4" r="1" fill="#fff"/><circle cx="9.500" cy="4" r="1" fill="#fff"/><path d="M6 6h4L8 7z" fill="#f5a623"/></svg></span>
  <span class="open lit"><svg width="17" height="17"><use href="#reel"/><circle cx="8.500" cy="8.500" r="7.500" fill="none" stroke="#222" stroke-width="1.500"/></svg></span>
  <span><svg width="15" height="15"><path d="M0 0h15v15H0z" fill="#4b9be4"/><path d="M2 5q3-4 5 0t5-2M2 9q3-3 4 0-1 4-4 4M8 8q5-2 5 2t-4 2M5 3l7 8M12 6L7 13" fill="none" stroke="#d8ecff"/></svg></span>
  <span class="open last"><svg width="17" height="15"><path d="M1 1h5l1 2h9v11H1z" fill="#e8c766"/><path d="M2 5h13v9H2z" fill="#f8e7a3"/><path d="M5 9h8v5h-2v-2H7v2H5z" fill="#4f9ed4"/></svg></span>
  <div class="tray">
    <svg class="sg" width="15" height="15"><path d="M0 0h15v15H0z" fill="#e65323"/><path d="M11.500 4.500H5q-1.500 0-1.500 1.500T5 7.500h5q1.500 0 1.500 1.500T10 10.500H3.500" fill="none" stroke="#fff" stroke-width="2"/></svg>
    <svg class="more" width="7" height="4"><path d="M0 4h7L3.500 0z" fill="#fff"/></svg>
    <svg width="15" height="15"><path d="M1.500 0v15" stroke="#fff" stroke-width="1.500"/><path d="M3 1h6q2 1 2 0v6H3z" fill="#fff"/><circle cx="10" cy="10" r="4.500" fill="#d5312d"/><path d="M8 8l4 4M12 8l-4 4" stroke="#fff" stroke-width="1.400"/></svg>
    <svg width="15" height="14"><path d="M5 3.500h9v7H5zM5 13h8M9 10v3" fill="none" stroke="#fff" stroke-width="1.300"/><path d="M.7 0v3.500h4V0M2.700 3.500V12H5" fill="none" stroke="#fff" stroke-width="1.300"/></svg>
    <svg width="15" height="14"><path d="M0 5h2.500L6 1v12L2.500 9H0z" fill="#fff"/><path d="M8 4.500q1.500 2.500 0 5M10.300 3q2.500 4 0 8M12.600 1.500q3.500 5.500 0 11" fill="none" stroke="#fff"/></svg>
    <time>21:22</time><i class="peek"></i>
  </div>
</footer>
</body>
</html>
```

FILE: styles.css
```css
* { box-sizing: border-box; margin: 0; padding: 0; }
body { width: 1440px; height: 900px; overflow: hidden; background: #000; font: 12.5px/1 "Noto Sans", "Noto Sans CJK SC", sans-serif; color: #ccc; white-space: nowrap; }
svg { display: block; flex: none; }
i, em { font-style: normal; }
ul, ol { list-style: none; }
.defs { position: absolute; }
.serif { font-family: "Liberation Serif", serif; }
.desktop { display: flex; height: 871px; border-bottom: 1px solid #000; }
.player { width: 1217px; flex: none; display: flex; flex-direction: column; }

.titlebar { height: 26px; display: flex; align-items: center; background: linear-gradient(#1a1a1a, #050505 60%); border-bottom: 2px solid #000; }
.brand { width: 124px; height: 24px; padding: 1px 0 0 7px; display: flex; align-items: center; gap: 5px; background: linear-gradient(#101212, #262b2c); clip-path: polygon(0 0, 78% 0, 84% 20%, 94% 85%, 100% 100%, 0 100%); }
.brand b { font-size: 12.8px; font-weight: 500; color: #ddd; margin: 0 2px 0 -1px; }
.movie { flex: 1; padding: 2px 0 0 356px; font-size: 12.3px; letter-spacing: -.13px; color: #ccc; }
.wins { display: flex; height: 24px; padding-right: 4px; }
.wins span { display: flex; align-items: center; justify-content: center; }
.plain { width: 28px; }
.wbtn { width: 29px; border-left: 1px solid #000; background: linear-gradient(#353535, #161616); }
.close { width: 34px; background: linear-gradient(#701f20, #470c0e); }

.toolbar { height: 25px; display: flex; background: linear-gradient(#292929, #202020); padding-left: 2px; border-bottom: 1px solid #000; }
.toolbar span { width: 31px; display: flex; align-items: center; justify-content: center; border-right: 2px solid #0a0a0a; font-size: 12px; color: #bbb; }
.toolbar span:nth-child(3) { width: 42px; font-size: 12.5px; }
.search { margin: 1px 3px 0 auto; width: 236px; height: 23px; background: #303030; border: 1px solid #090909; display: flex; align-items: center; justify-content: space-between; padding: 0 5px 0 7px; color: #686868; font-size: 12px; }

.video { height: 767px; background: #000; padding-left: 80px; }
.word { width: 1057px; height: 767px; display: flex; flex-direction: column; background: #b8d6f6; color: #30549a; }
.tabs { height: 29px; display: flex; align-items: flex-end; background: #b7d7f8; }
.tabs span { height: 27px; line-height: 27px; text-align: center; }
.orb { width: 50px; height: 29px; padding-left: 4px; }
.tabs .on { width: 49px; background: linear-gradient(#f3f8fd, #dce8f5); border: 1px solid #a9c7ea; border-bottom: 0; border-radius: 3px 3px 0 0; line-height: 25px; }
.t2 { width: 59px; }
.tabs .t2.a { width: 56px; }
.tabs .t2.b { width: 54px; }
.t4 { width: 77px; }
.t3 { width: 67px; }
.help { margin: 0 4px 7px auto; }

.ribbon { height: 110px; display: flex; gap: 3px; padding: 2px 4px 4px; background: linear-gradient(#dbe6f3, #c5daf2 20%, #d0e0f2 75%, #c5f0f8); border: 1px solid #a8c5e8; border-width: 1px 1px 0 0; border-radius: 3px; }
.grp { height: 104px; display: flex; flex-direction: column; flex: none; border: 1px solid #a7c2e1; border-radius: 3px; background: linear-gradient(#dbe5f1, #c9dbf0 20%, #d5e2f1 80%); box-shadow: inset 1px 1px #e8f0f9; }
.body { height: 83px; display: flex; flex: none; }
.grp footer { height: 19px; display: flex; align-items: center; background: #c1d9f1; border-radius: 0 0 3px 3px; padding-right: 4px; }
.grp footer b { flex: 1; text-align: center; font-weight: 400; color: #4b6ea9; padding-right: 5px; }
.grp.edit footer b { padding: 0; }
.grp footer svg { margin-top: -6px; }
.clip { width: 75px; } .font { width: 326px; } .para { width: 252px; } .sty { width: 308px; } .edit { width: 70px; }
.paste { width: 48px; display: flex; flex-direction: column; align-items: center; padding-top: 4px; gap: 7px; }
.paste svg:first-child { margin-left: 3px; }
.mini { display: flex; flex-direction: column; align-items: center; gap: 9px; padding: 4px 0 0 1px; }
.rows { flex-direction: column; padding-left: 3px; }
.row { display: flex; gap: 3.5px; align-items: flex-start; }
.r1 { padding-top: 11px; height: 49px; }
.r2 { gap: 4px; }
.p1 { padding-top: 13px; height: 48px; }
.combo { height: 26px; display: flex; align-items: center; justify-content: space-between; background: #e9f2fb; border: 1px solid #b3cae6; color: #222; padding: 0 3px 2px 2px; }
.c1 { width: 128px; margin-right: -2px; font-size: 12.7px; }
.c2 { width: 55px; }
.box { height: 23px; display: flex; align-items: center; justify-content: space-around; flex: none; border: 1px solid #9cb8dc; border-radius: 3px; background: linear-gradient(#d5e2f3, #c7d8ee 50%, #bfd2eb 51%, #cfdef1); }
.w25 { width: 24.5px; } .w46 { width: 46px; } .w68 { width: 68px; } .w33 { width: 33px; } .w32 { width: 32px; } .w102 { width: 102px; }
.fmt { width: 190px; padding: 0 3px 0 2px; }
.g { font: 700 15px/1.2 "Liberation Serif", serif; color: #222; }
.g sup, .g sub { font-size: 8px; color: #4468b0; line-height: 0; }
.big { font-size: 17px; } .small { font-size: 13px; }
.tip { margin: -12px 0 0 -1px; }
.it { font-style: italic; padding: 0 6px; }
.u { text-decoration: underline; }
.st { text-decoration: line-through; font-size: 12px; padding-left: 3px; }
.x { font: 700 13px/1.2 "Noto Sans", sans-serif; }
.aa { font-size: 14px; }
.frame { border: 1px solid #445; width: 16px; height: 18px; text-align: center; line-height: 16px; }
.shade { background: #a6a6ac; width: 15px; height: 16px; text-align: center; line-height: 16px; }
.hot { height: 22px; width: 24px; display: flex; align-items: center; justify-content: center; background: linear-gradient(#f9c878, #f8ad43 50%, #fde484); }
.al { width: 121px; }
.al b { width: 24px; display: flex; justify-content: center; }
.al .hot { height: 21px; }
.gallery { margin: 3px 0 0 4px; width: 241px; height: 62px; display: flex; align-items: flex-start; padding: 4px 0 0 4px; gap: 8px; border: 1px solid #bcd0ea; background: #d3e3f8; }
.card { width: 66px; height: 51px; background: #fafafa; display: flex; flex-direction: column; align-items: center; justify-content: space-between; padding: 8px 0 3px; overflow: hidden; color: #293a8c; }
.card em { color: #111; font-size: 12.7px; letter-spacing: -.3px; line-height: 16px; }
.card .h1 { font-size: 24px; font-weight: 700; letter-spacing: -.4px; line-height: 18px; align-self: flex-start; padding-left: 2px; }
.card span { display: flex; align-items: center; gap: 4px; }
.updn { margin: -4px 0 0 -2px; width: 14px; display: flex; flex-direction: column; }
.updn i { height: 20px; display: flex; align-items: center; justify-content: center; border: 1px solid #b3cbe8; background: #cfe0f5; }
.updn .off { background: #e8e9e8; }
.change { width: 58px; display: flex; flex-direction: column; align-items: center; padding-top: 5px; gap: 7px; }
.edit .body { flex-direction: column; padding: 1px 0 0 6px; }
.edit p { height: 22.5px; display: flex; align-items: center; gap: 4px; }
.edit p svg:first-child { width: 16px; }
.edit p svg:last-child { margin-left: 1px; }

.hruler { height: 25px; flex: none; display: flex; background: #9bb9e0; }
.tabsel { width: 24px; height: 24px; border: 1px solid #6584c2; padding: 4px; background: #acc7ec; }
.tabsel i { display: flex; width: 14px; height: 14px; align-items: center; justify-content: center; background: #e4edfa; border: 1px solid #6080b7; }
.scale { position: relative; margin: 6px 0 0 97px; width: 824px; height: 13px; background: linear-gradient(90deg, #c0d5f2 124px, #fafafa 124px, #fafafa 696px, #c0d5f2 696px); }
.nums { display: flex; margin-left: -5.500px; }
.nums i { flex: none; width: 28.880px; text-align: center; font: 10px/13px "Liberation Sans", sans-serif; color: #4c5c74; }
.nums i::after { content: ""; display: block; width: 1px; height: 3px; margin: 1px auto 0; background: #6c87ad; }
.nums i:empty::after { visibility: hidden; }
.mk { position: absolute; }
.first { left: 119px; top: -3px; } .left { left: 148px; top: 3px; } .right { left: 691px; top: 5px; }
.corner { margin-left: 95px; padding-top: 2px; }

.doc { height: 580px; display: flex; flex: none; }
.vruler { width: 24px; background: #9bb9e0; padding-left: 5px; }
.vs { width: 13px; height: 112px; background: #bcd1ef; display: flex; flex-direction: column; align-items: center; font: 10px/1 "Liberation Sans", sans-serif; color: #3f4f68; gap: 0; }
.vs b { width: 13px; height: 8px; background: linear-gradient(#fff 2px, #345 2px, #345 3px, #fff 3px); flex: none; }
.vs u { text-decoration: none; height: 13px; line-height: 13px; transform: rotate(-90deg); }
.vs i { height: 5px; line-height: 5px; margin: 8px 0 0; }
.vs i:nth-of-type(1) { margin: 12px 0 3px; }
.vs u + i { margin: 3px 0 0; }
.vs i + i { margin: 15px 0 3px; }
.canvas { position: relative; width: 1016px; padding-left: 97px; overflow: hidden; background: linear-gradient(#a7c9eb, #a9bee3 45px, #a3bade 60px, #8eafdb 75px, #86a8da 100px, #7ea5d4 130px, #7c9fce 150px, #7599ca 240px, #5f88bd 350px, #4e76b0 415px, #5781b8 440px, #5988c2 520px, #618ccc); }
.curve { position: absolute; left: 0; top: 0; }
.page { position: relative; width: 822px; background: #f8f8f8; border: 1px solid #222c3c; box-shadow: 4px 3px 6px #334c7690; }
.one { height: 109px; border-top: 0; padding: 8px 99px 0; display: flex; justify-content: space-between; }
.two { margin-top: 13px; height: 480px; padding: 58px 0 0 99px; }
.cm { width: 25px; height: 25px; border: 0 solid #aaa; }
.br { border-width: 1px 1px 0 0; } .bl { border-width: 1px 0 0 1px; }
.tr { border-width: 0 1px 1px 0; } .tl { border-width: 0 0 1px 1px; }
.corners .cm { height: 22px; }
.phead { margin-left: 24px; height: 18px; display: flex; align-items: center; font-size: 12.4px; letter-spacing: -.38px; color: #868686; }
.phead q { quotes: none; display: inline-block; width: 14px; }
.phead s { text-decoration: underline wavy #5a9e5a 1px; text-underline-offset: 2px; }
.corners { width: 622px; height: 22px; display: flex; justify-content: space-between; background: linear-gradient(#888, #888) 24px 0 / 574px 1px no-repeat; }
.two h1 { height: 54px; display: flex; align-items: center; font: 700 26px/1 "Noto Sans", sans-serif; color: #0a0a0a; padding-left: 16px; letter-spacing: -.2px; }
.two h1 i { width: 4px; height: 4px; background: #111; margin: -6px 5px 0 0; }
.two h1 svg { margin-top: 10px; }
.list { padding: 22px 0 0 24px; color: #111; font-size: 14.4px; }
.list li { height: 21.45px; display: flex; align-items: center; }
.list b { width: 29px; font-weight: 400; font-size: 13px; color: #2b2f45; }
.list .sub { padding-left: 29px; }
.list em { font-size: 13.4px; letter-spacing: -.35px; color: #22263a; }
.list .tight { letter-spacing: -.5px; }
.list .bad { text-decoration: underline wavy #dc5555 1px; text-underline-offset: 2px; }
.list svg { margin-top: 3px; }
.ibeam { position: absolute; left: 386px; top: 39px; }
.vscroll { width: 17px; background: #9fc1ed; display: flex; flex-direction: column; padding-left: 1px; }
.track { height: 529px; background: linear-gradient(90deg, #8eadd9, #7596cb 40%, #7b9ccd); display: flex; flex-direction: column; align-items: center; padding: 5px 0 4px; }
.thumb { width: 13px; height: 59px; margin: 365px 0 auto; background: linear-gradient(90deg, #f2f4f8 35%, #b5cdec 60%, #dbe6f4); border: 1px solid #687fa8; display: flex; align-items: center; justify-content: center; }
.jump { flex: 1; display: flex; flex-direction: column; align-items: center; justify-content: space-around; }

.status { height: 23px; flex: none; display: flex; align-items: center; background: linear-gradient(#7f98bd 1px, #d8e6f7 2px, #b7d2f2 40%, #d6e5f7 90%, #fafcff 95%); font-size: 12.5px; color: #304f7c; }
.status span { height: 20px; line-height: 17px; border-right: 1px solid #9cb6d8; flex: none; }
.s1 { width: 70px; padding-left: 8px; } .s2 { width: 83px; padding-left: 8px; } .s3 { width: 28px; }
.s3 { display: flex; align-items: center; padding-left: 8px; border: 0 !important; }
.s4 { width: 80px; padding-left: 13px; } .s5 { width: 44px; padding-left: 9px; }
.sright { margin-left: auto; width: 295px; height: 22px; display: flex; align-items: center; background: linear-gradient(#7f98bd 1px, #b4cdf0 2px, #86a9dc 50%, #a5c4ee 90%); border-left: 1px solid #7894be; padding-left: 5px; }
.views { display: flex; border: 1px solid #7f9cc9; height: 19px; width: 95px; background: #c8daf2; }
.views i { flex: 1; display: flex; align-items: center; justify-content: center; border-right: 1px solid #a9c0e2; }
.views .on { background: #fac766; }
.status .pct { border: 0; width: 42px; padding-left: 8px; margin-right: 8px; font-size: 12.8px; }

.seek { height: 12px; display: flex; align-items: center; justify-content: space-between; padding: 0 7px 1px 6px; background: #050505; }
.bar { width: 1176px; display: flex; align-items: center; height: 9px; background: linear-gradient(#262626, #262626) 0 4px / 100% 2px no-repeat; }
.bar i { width: 846px; height: 1px; background: #447ba8; box-shadow: 0 1px #17344d; }
.bar b { width: 21px; height: 7px; background: linear-gradient(#666, #333); border-radius: 4px; border: 1px solid #555; }
.controls { height: 40px; display: flex; align-items: center; padding: 0 10px 2px 8px; background: linear-gradient(#17191b, #0b0c0d); border-top: 1px solid #222; }
.time { width: 394px; padding-left: 6px; color: #999; font-size: 12.6px; word-spacing: 1.2px; }
.time b { color: #eee; font-weight: 400; }
.mid { display: flex; align-items: center; height: 39px; width: 287px; padding-left: 71px; margin-bottom: -2px; background: linear-gradient(90deg, transparent, #162b3d90 50%, transparent); }
.mid span { display: flex; align-items: center; justify-content: center; height: 39px; padding-bottom: 2px; }
.k1 { width: 46px; } .k2 { width: 46px; }
.mid .prev { width: 50px; }
.pause { width: 55px; background: linear-gradient(#203a50, #1d4262); }
.vol { margin-left: -1px; }
.vbar { position: relative; margin-left: 10px; width: 54px; height: 3px; background: #3f83b8; border-bottom: 1px solid #254b66; }
.vbar::after { content: ""; position: absolute; right: -4px; top: -3px; width: 9px; height: 9px; border-radius: 50%; background: #c8c8c8; }
.right { margin-left: auto; display: flex; align-items: center; gap: 14px; }
.right i { width: 1px; height: 16px; background: #292929; margin: 0 -5px 0 -4px; }

.playlist { position: relative; flex: 1; background: #131313; border-left: 2px solid #000; display: flex; flex-direction: column; }
.playlist header { height: 25px; display: flex; align-items: center; justify-content: space-between; padding: 2px 11px 0 15px; background: linear-gradient(#1f1f1f, #0d0d0d); border-bottom: 1px solid #000; }
.playlist header b { font-size: 13px; font-weight: 700; }
.playlist header svg { margin-top: -4px; }
.pt { height: 23px; display: flex; justify-content: flex-end; background: linear-gradient(#151515, #1e1e1e); border-bottom: 1px solid #000; padding-right: 1px; }
.pt span { width: 26.500px; display: flex; align-items: center; justify-content: center; border-left: 1px solid #070707; }
.playlist ul { padding-top: 4px; }
.playlist li { height: 27px; display: flex; align-items: center; padding: 0 9px 0 17px; border-bottom: 1px solid #080808; box-shadow: 0 1px #1f1f1f; font-size: 12.7px; color: #c5c5c5; margin-right: 2px; }
.playlist li time { margin-left: auto; margin-right: -2px; font-size: 12.4px; }
.playlist .now { background: linear-gradient(#2e87ca, #1c68a7); color: #fff; padding-left: 6px; }
.now svg { margin-right: 6px; }
.playlist > footer { height: 25px; margin-top: auto; display: flex; align-items: center; justify-content: flex-end; gap: 4px; border-top: 1px solid #050505; background: linear-gradient(#222, #111); }
.dl { width: 77px; height: 20px; display: flex; align-items: center; background: linear-gradient(#303030, #191919); border: 1px solid #333; padding-left: 4px; font-size: 12.4px; }
.pill { position: absolute; left: 92px; top: 775px; width: 92px; height: 38px; border-radius: 19px; background: linear-gradient(#fafafa, #d9d9d9); display: flex; align-items: center; padding-left: 2px; }
.ball { width: 34px; height: 34px; border-radius: 50%; border: 2px solid #459b55; background: linear-gradient(#e5f2dd 35%, #8ddc58 37%, #a7e883); display: flex; align-items: center; justify-content: center; font-size: 10px; color: #5a3a26; }
.rates { width: 43px; margin-left: 3px; font-size: 10px; color: #222; letter-spacing: -.35px; }
.rates p { height: 16px; display: flex; align-items: center; justify-content: space-between; }

.taskbar { position: relative; height: 29px; display: flex; align-items: center; border-top: 1px solid #8ebcd6; background: linear-gradient(90deg, #3b93bf, #3d9bd0 15%, #348fcb 30%, #277fc4 45%, #2377b9 60%, #2a73bb 68%, #1e63ac 80%, #1b4f86 95%, #183e6d); }
.start { width: 58px; height: 28px; padding-left: 8px; }
.start svg { margin-top: -6px; }
.taskbar > span { width: 46px; height: 28px; display: flex; align-items: center; justify-content: center; flex: none; }
.taskbar > .open { width: 42px; margin: 0 2px; border: 1px solid #bfe0f0; border-radius: 3px; background: linear-gradient(135deg, #9fc8df, #4c93bd 55%, #76b2d3); }
.taskbar > .lit { background: linear-gradient(120deg, #b9dec2, #7fc696 45%, #d5ead9); }
.taskbar > .last { width: 38px; background: linear-gradient(135deg, #8fc0e0, #3d8cc6 55%, #5fa3d3); box-shadow: 4px 0 0 -1px #4c93c6, 5px 0 0 -1px #a9cde4; }
.tray { margin-left: auto; height: 28px; display: flex; align-items: center; width: 394px; padding-left: 201px; gap: 10px; background: linear-gradient(50deg, transparent 5px, transparent 10px), linear-gradient(50deg, transparent 14px, #9ccbf0 20px, #9ccbf0 23px, transparent 30px); }
.sg { margin: -6px 7px 0 0; }
.more { margin-right: 4px; }
.tray svg:nth-child(5) { margin-left: -2px; }
.tray time { margin-left: 9px; font-size: 12.5px; color: #fff; letter-spacing: -.2px; }
.peek { margin-left: auto; margin-right: 1px; width: 13px; height: 28px; flex: none; border: 1px solid #8ba4bf; background: linear-gradient(135deg, #6d8aad, #335b87); }
```
